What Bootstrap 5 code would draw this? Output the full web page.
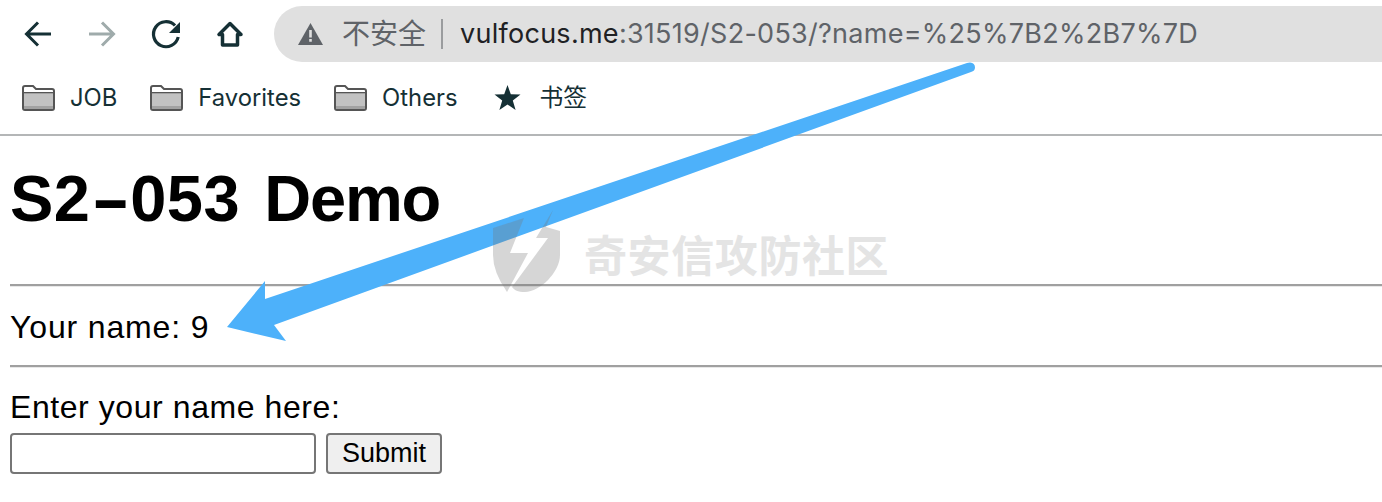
<!DOCTYPE html>
<html lang="zh"><head><meta charset="utf-8">
<link href="https://cdn.jsdelivr.net/npm/bootstrap@5.3.0/dist/css/bootstrap.min.css" rel="stylesheet">
<style>
html,body{height:502px;overflow:hidden;background:#fff;color:#000}
body{position:relative;font-family:"Liberation Sans",Arial,sans-serif}
.topbar{height:68px;padding-left:20px}
.navico{width:36px;height:36px;flex:none}
.navslot{width:64px}
.navslot svg{display:block}
.addr{margin-left:26px;height:56px;flex:1;background:#e0e0e0;border-radius:28px 0 0 28px;padding-left:24px;font-family:Inter,"Noto Sans CJK SC",sans-serif;font-size:27px;letter-spacing:.27px;color:#5f6368;white-space:nowrap}
.cjk{font-family:"Noto Sans CJK SC",sans-serif;font-size:28px;letter-spacing:0;line-height:1;margin-left:19px;margin-top:-4px}
.sep{width:2px;height:30px;background:#9a9c9e;margin:0 17px 0 15px}
.host{color:#202124}
.marks{padding:0 0 6px 22px;font-family:Inter,"Noto Sans CJK SC",sans-serif;font-size:23.8px;color:#153035;border-bottom:2px solid #b4b6b7;height:68px;gap:33px}
.marks svg{flex:none}
.marks .lbl{margin-left:15px}
.marks .starmark{margin-left:3px}
.marks .starmark .lbl{margin-left:19px}
.pagebody{padding:0 10px}
h1.ttl{font-family:"Liberation Sans",Arial,sans-serif;font-weight:700;font-size:65px;word-spacing:6px;line-height:74px;margin:26px 0 48px}
.nums{letter-spacing:.5px}
.wordtail{letter-spacing:-1.2px}
.dash{display:inline-block;transform:scaleX(1.8);margin:0 9px}
hr.rule{margin:0 -10px 0 0;border:0;border-top:2px solid #a0a0a0;border-bottom:1px solid #e8e8e8;opacity:1;height:3px;box-sizing:border-box}
.greet{font-size:32px;letter-spacing:.85px;line-height:38px;padding:21px 0 19px}
.lab{font-size:32px;letter-spacing:.57px;line-height:38px;margin-top:20px}
.txtin{display:block;width:306px;height:41px;border:2px solid #767676;border-radius:4px;background:#fff}
.subbtn{width:116px;height:41px;border:2px solid #767676;border-radius:4px;background:#efefef;color:#000;font-size:27px;line-height:1;padding:0}
.formrow{gap:10px;margin-top:7px}
.overlay{position:absolute;left:0;top:0;pointer-events:none}
.wm{position:absolute;left:584px;top:228px;font-family:"Noto Sans CJK SC",sans-serif;font-weight:700;font-size:43px;letter-spacing:.6px;line-height:50px;color:#e4e4e4;white-space:nowrap}
</style></head><body>
<div class="topbar d-flex align-items-center">
<div class="navslot"><svg class="navico" viewBox="0 0 36 36" fill="none" stroke="#153035" stroke-width="3"><path d="M31 18H7M18 6.500 6.500 18 18 29.500"/></svg></div>
<div class="navslot"><svg class="navico" viewBox="0 0 36 36" fill="none" stroke="#9fabab" stroke-width="3"><path d="M5 18h24M18 6.500 29.500 18 18 29.500"/></svg></div>
<div class="navslot"><svg class="navico" viewBox="0 0 36 36" fill="none"><path d="M27 9.500A12.500 12.500 0 1 0 30.200 21" stroke="#153035" stroke-width="3.200"/><path d="M32 6v11H21z" fill="#153035"/></svg></div>
<div><svg class="navico" viewBox="0 0 36 36" fill="none" stroke="#153035" stroke-width="3.500" stroke-linejoin="round"><path d="M18 7.500 7 18.500h3.500V29h15V18.500H29z"/></svg></div>
<div class="addr d-flex align-items-center">
<svg width="25" height="22" viewBox="0 0 25 22"><path d="M12.500 0 25 22H0z" fill="#5f6368"/><path d="M11.200 7h2.600v7.500h-2.600zM11.200 16h2.600v2.800h-2.600z" fill="#e0e0e0"/></svg>
<span class="cjk">不安全</span><span class="sep"></span>
<span><span class="host">vulfocus.me</span>:31519/S2-053/?name=%25%7B2%2B7%7D</span></div>
</div>
<div class="marks d-flex align-items-center">
<div class="d-flex align-items-center"><svg width="33" height="26" viewBox="0 0 33 26"><path d="M1 3a2 2 0 0 1 2-2h8l3 3h16a2 2 0 0 1 2 2v17a2 2 0 0 1-2 2H3a2 2 0 0 1-2-2z" fill="#fff" stroke="#555" stroke-width="2"/><path d="M2 8h29v16H2z" fill="#c2c2c2"/><path d="M2 7h29v1.300H2z" fill="#555"/><path d="M2 21h29v3H2z" fill="#a2a2a2"/></svg><span class="lbl">JOB</span></div>
<div class="d-flex align-items-center"><svg width="33" height="26" viewBox="0 0 33 26"><path d="M1 3a2 2 0 0 1 2-2h8l3 3h16a2 2 0 0 1 2 2v17a2 2 0 0 1-2 2H3a2 2 0 0 1-2-2z" fill="#fff" stroke="#555" stroke-width="2"/><path d="M2 8h29v16H2z" fill="#c2c2c2"/><path d="M2 7h29v1.300H2z" fill="#555"/><path d="M2 21h29v3H2z" fill="#a2a2a2"/></svg><span class="lbl">Favorites</span></div>
<div class="d-flex align-items-center"><svg width="33" height="26" viewBox="0 0 33 26"><path d="M1 3a2 2 0 0 1 2-2h8l3 3h16a2 2 0 0 1 2 2v17a2 2 0 0 1-2 2H3a2 2 0 0 1-2-2z" fill="#fff" stroke="#555" stroke-width="2"/><path d="M2 8h29v16H2z" fill="#c2c2c2"/><path d="M2 7h29v1.300H2z" fill="#555"/><path d="M2 21h29v3H2z" fill="#a2a2a2"/></svg><span class="lbl">Others</span></div>
<div class="d-flex align-items-center starmark"><svg width="27" height="26" viewBox="0 0 27 26"><path d="M13.500 0l3.300 9.300 9.700.3-7.700 6 2.800 9.400-8.100-5.600L5.400 25l2.800-9.400-7.700-6 9.700-.3z" fill="#153035"/></svg><span class="lbl">书签</span></div>
</div>
<main class="pagebody">
<h1 class="ttl"><span class="nums">S2</span><span class="dash">-</span><span class="nums">053</span> <span class="wordtail">Demo</span></h1>
<hr class="rule">
<div class="greet">Your name: 9</div>
<hr class="rule">
<div class="lab">Enter your name here:</div>
<form class="d-flex formrow"><input class="txtin" type="text" aria-label="name"><button class="subbtn" type="button">Submit</button></form>
</main>
<svg class="overlay" width="1382" height="502" viewBox="0 0 1382 502">
<path d="M970 62.500Q975 63 975 67.500 975 71 971 72L274 325 286 341 227 327 265 281 265 299 967 63z" fill="#4db1fa"/>
<path d="M493 228 524 218 510 253H528L507 292Q493 272 493 255z" fill="#787878" fill-opacity=".3"/>
<path d="M553 210 546 227 560 231V255C560 272 540 292 525 292 518 292 514 290 512 287L548 238H536z" fill="#787878" fill-opacity=".3"/>
</svg>
<div class="wm">奇安信攻防社区</div>
<script src="https://cdn.jsdelivr.net/npm/bootstrap@5.3.0/dist/js/bootstrap.bundle.min.js"></script>
</body></html>
